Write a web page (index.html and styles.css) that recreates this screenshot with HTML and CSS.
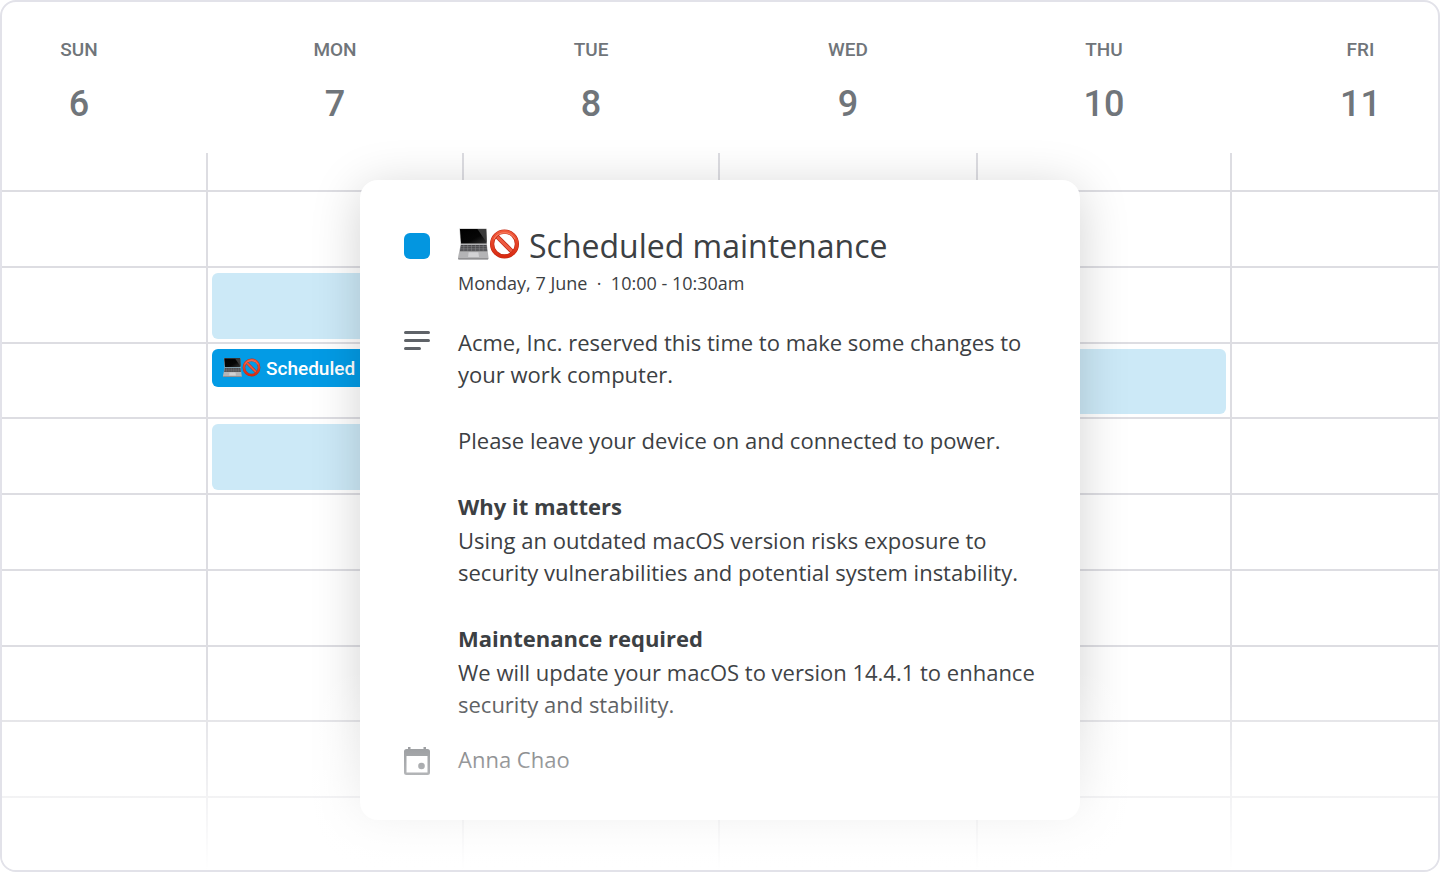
FILE: index.html
```html
<!DOCTYPE html>
<html lang="en">
<head>
<meta charset="utf-8">
<meta name="viewport" content="width=device-width, initial-scale=1">
<title>Scheduled maintenance</title>
<link rel="stylesheet" href="styles.css">
</head>
<body>
<svg class="defs" aria-hidden="true">
  <defs>
    <linearGradient id="screen" x1="0" y1="0" x2="1" y2="1">
      <stop offset="0" stop-color="#000"/><stop offset=".6" stop-color="#060606"/><stop offset="1" stop-color="#333"/>
    </linearGradient>
    <linearGradient id="ring" x1="0" y1="0" x2="0" y2="1">
      <stop offset="0" stop-color="#f0583a"/><stop offset="1" stop-color="#d92b12"/>
    </linearGradient>
    <symbol id="laptop" viewBox="0 0 32 32">
      <path d="M1.500 0h28l.5 16H2.500z" fill="#b9b9b9"/>
      <path d="M2 .5h27l.5 15H3.200z" fill="url(#screen)"/>
      <path d="M20 .5h9l.5 14z" fill="#3a3a3a"/>
      <path d="M2.800 16h27L31.500 30 31 32H.5L0 30z" fill="#b4b4b6"/>
      <path d="M3 17h26.500l.7 6.500H2z" fill="#47474a"/>
      <path d="M3 18.700h26.600M2.600 20.500h27.200M2.400 22.200H30M6 17v6M10 17v6M14 17v6M18 17v6M22 17v6M26 17v6" stroke="#8f8f92" stroke-width=".5"/>
      <path d="M11 24.500h10l.7 5H10.400z" fill="#d2d2d4"/>
      <path d="M0 30.500h31.500L31 32H.5z" fill="#919193"/>
    </symbol>
    <symbol id="prohibited" viewBox="0 0 32 32">
      <path d="M7 7l18 18" stroke="#b82411" stroke-width="4.600"/>
      <path d="M7 7l18 18" stroke="#ee593f" stroke-width="3.200"/>
      <circle cx="16" cy="16" r="12.800" fill="none" stroke="#c12a14" stroke-width="4.400"/>
      <circle cx="16" cy="16" r="12.800" fill="none" stroke="url(#ring)" stroke-width="3.200"/>
      <path d="M5 11a12.500 12.500 0 0 1 22 0" fill="none" stroke="#fa8b70" stroke-width="1"/>
    </symbol>
  </defs>
</svg>
<main class="frame">
  <section class="week" aria-label="Week">
    <div class="day">
      <h2 class="day-head"><span class="name">SUN</span><span class="num">6</span></h2>
      <div class="slots"><div class="slot"></div><div class="slot"></div><div class="slot"></div><div class="slot"></div><div class="slot"></div><div class="slot"></div><div class="slot"></div><div class="slot"></div><div class="slot"></div><div class="slot"></div></div>
    </div>
    <div class="day">
      <h2 class="day-head"><span class="name">MON</span><span class="num">7</span></h2>
      <div class="slots"><div class="slot"></div><div class="slot"></div><div class="slot"><div class="event"></div></div><div class="slot"><div class="event active"><span class="emoji"><svg><use href="#laptop"/></svg><svg><use href="#prohibited"/></svg></span>Scheduled</div></div><div class="slot"><div class="event"></div></div><div class="slot"></div><div class="slot"></div><div class="slot"></div><div class="slot"></div><div class="slot"></div></div>
    </div>
    <div class="day">
      <h2 class="day-head"><span class="name">TUE</span><span class="num">8</span></h2>
      <div class="slots"><div class="slot"></div><div class="slot"></div><div class="slot"></div><div class="slot"></div><div class="slot"></div><div class="slot"></div><div class="slot"></div><div class="slot"></div><div class="slot"></div><div class="slot"></div></div>
    </div>
    <div class="day">
      <h2 class="day-head"><span class="name">WED</span><span class="num">9</span></h2>
      <div class="slots"><div class="slot"></div><div class="slot"></div><div class="slot"></div><div class="slot"></div><div class="slot"></div><div class="slot"></div><div class="slot"></div><div class="slot"></div><div class="slot"></div><div class="slot"></div></div>
    </div>
    <div class="day">
      <h2 class="day-head"><span class="name">THU</span><span class="num">10</span></h2>
      <div class="slots"><div class="slot"></div><div class="slot"></div><div class="slot"></div><div class="slot"><div class="event"></div></div><div class="slot"></div><div class="slot"></div><div class="slot"></div><div class="slot"></div><div class="slot"></div><div class="slot"></div></div>
    </div>
    <div class="day">
      <h2 class="day-head"><span class="name">FRI</span><span class="num">11</span></h2>
      <div class="slots"><div class="slot"></div><div class="slot"></div><div class="slot"></div><div class="slot"></div><div class="slot"></div><div class="slot"></div><div class="slot"></div><div class="slot"></div><div class="slot"></div><div class="slot"></div></div>
    </div>
  </section>

  <div class="overlay">
    <article class="card">
      <span class="swatch"></span>
      <header>
        <h1 class="title"><span class="emoji"><svg><use href="#laptop"/></svg><svg><use href="#prohibited"/></svg></span>Scheduled maintenance</h1>
        <p class="when">Monday, 7 June &nbsp;·&nbsp; 10:00 - 10:30am</p>
      </header>
      <svg class="icon notes" viewBox="0 0 26 20" aria-hidden="true"><path d="M1.500 1.500h23M1.500 9.500h23M1.500 17.500h14" stroke="#5f6368" stroke-width="3" stroke-linecap="round"/></svg>
      <div class="body">
        <p>Acme, Inc. reserved this time to make some changes to your work computer.</p>
        <p>Please leave your device on and connected to power.</p>
        <section><h2>Why it matters</h2>
        <p>Using an outdated macOS version risks exposure to security vulnerabilities and potential system instability.</p></section>
        <section><h2>Maintenance required</h2>
        <p>We will update your macOS to version 14.4.1 to enhance security and stability.</p></section>
      </div>
      <svg class="icon calendar" viewBox="0 0 26 28" aria-hidden="true"><path fill="#5f6368" fill-rule="evenodd" d="M4 0h2.500v2h13V0H22v2h1.500A2.500 2.500 0 0 1 26 4.500v21a2.500 2.500 0 0 1-2.500 2.500h-21A2.500 2.500 0 0 1 0 25.500v-21A2.500 2.500 0 0 1 2.500 2H4zM2.500 9v16.500h21V9z"/><circle cx="17.500" cy="19" r="3.300" fill="#5f6368"/></svg>
      <p class="owner">Anna Chao</p>
    </article>
  </div>
  <div class="fade"></div>
</main>
</body>
</html>
```

FILE: styles.css
```css
* { box-sizing: border-box; }
body, h1, h2, p { margin: 0; }
body { background: #fff; }
.defs { position: absolute; width: 0; height: 0; }

.frame {
  position: relative;
  display: flex;
  min-height: 100vh;
  overflow: hidden;
  border: 2px solid #e2e2e9;
  border-radius: 16px;
  background: #fff;
}

/* The week is wider than the frame so that the outer days are cut off. */
.week {
  flex: 1;
  display: grid;
  grid-template-columns: 256fr 256fr 256fr 258fr 254fr 259fr;
  margin: 0 -51px 0 -52px;
  font-family: Roboto, sans-serif;
}
.day { display: flex; flex-direction: column; min-width: 0; }
.day-head {
  display: flex;
  flex-direction: column;
  align-items: center;
  height: 151px;
  padding: 36px 0 0 2px;
  color: #70757a;
  font-weight: 500;
}
.name { font-size: 19px; line-height: 24px; }
.num { margin-top: 20px; font-size: 36px; line-height: 44px; }
.slots {
  flex: 1;
  display: grid;
  grid-template-rows: 37px repeat(8, minmax(72px, 76fr)) minmax(68px, 74fr);
  border-left: 2px solid #dddde2;
}
.slot { padding: 5px 4px 3px; border-top: 2px solid #dddde2; }
.slot:first-child { border-top: 0; }
.event { height: 100%; border-radius: 6px; background: #cce9f7; }
.event.active {
  display: flex;
  align-items: center;
  height: 38px;
  padding: 2px 0 0 11px;
  background: #039be5;
  color: #fff;
  font-size: 19px;
  font-weight: 500;
}

.emoji { display: inline-flex; }
.active .emoji { margin-right: 5px; padding-bottom: 2px; }
.active svg { width: 19px; height: 19px; }
.title .emoji { margin-right: 9px; padding-bottom: 4px; }
.title svg { width: 31px; height: 32px; }

.overlay {
  position: absolute;
  inset: 0;
  top: 178px;
  display: flex;
  justify-content: center;
  align-items: flex-start;
}
.card {
  display: grid;
  grid-template-columns: 26px 1fr;
  column-gap: 28px;
  width: 100%;
  max-width: 720px;
  padding: 46px 40px 45px 44px;
  border-radius: 18px;
  background: #fff;
  box-shadow: 0 8px 50px rgba(0, 0, 0, 0.18);
  color: #3c4043;
  font-family: "Open Sans", sans-serif;
}
.swatch { width: 26px; height: 26px; margin-top: 7px; border-radius: 6px; background: #0396e0; }
.title { display: flex; align-items: center; font-size: 32px; line-height: 40px; font-weight: 400; }
.when { margin-top: 4px; font-size: 18px; line-height: 26px; }
.icon { width: 26px; }
.notes { height: 20px; margin-top: 35px; }
.body { display: grid; gap: 34px; margin-top: 30px; font-size: 22px; line-height: 32px; }
.body h2 { margin-bottom: 2px; font-size: 22px; line-height: 32px; font-weight: 700; }
.calendar { height: 28px; margin-top: 27px; }
.owner { margin-top: 23px; font-size: 22px; line-height: 32px; }

.fade {
  position: absolute;
  inset: auto 0 0;
  height: 200px;
  background: linear-gradient(rgba(255, 255, 255, 0), #fff);
  pointer-events: none;
}
```
